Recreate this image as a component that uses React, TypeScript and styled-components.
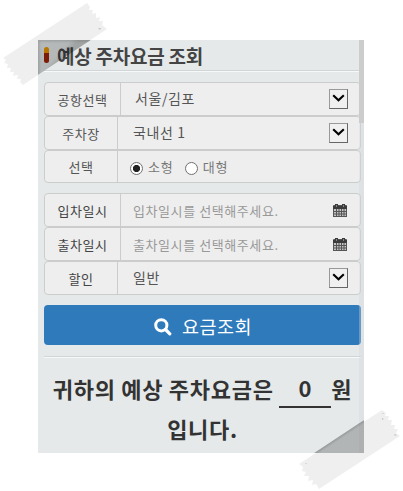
import { FC, ReactNode, useState } from "react";
import styled, { createGlobalStyle } from "styled-components";

const GlobalStyle = createGlobalStyle`
  body {
    margin: 0;
    background: #ffffff;
    font-family: "Noto Sans CJK KR", "Noto Sans", sans-serif;
  }

  * {
    box-sizing: border-box;
  }
`;

const Page = styled.div`
  position: relative;
  width: 403px;
  height: 491px;
  padding: 40px 39px 38px 38px;
  overflow: hidden;
`;

const Panel = styled.main`
  position: relative;
  height: 413px;
  padding: 0 3px 0 6px;
  background: #e5e9ea;
`;

const Header = styled.header`
  display: flex;
  align-items: center;
  height: 31px;
  margin-bottom: 11px;
  border-bottom: 1px solid #d1d5d8;
  box-shadow: 0 1px 0 #f7f8f8;
`;

const Capsule = styled.span`
  width: 5px;
  height: 16px;
  margin-right: 8px;
  border-radius: 3px;
  background: linear-gradient(#e89500 0 6px, #9c2409 6px);
`;

const Title = styled.h1`
  margin: 0;
  padding-top: 1px;
  color: #444444;
  font-size: 19px;
  line-height: 28px;
  font-weight: 700;
  letter-spacing: -0.25px;
  white-space: nowrap;
`;

const Group = styled.section`
  display: flex;
  flex-direction: column;
  margin-bottom: 10px;
`;

const Row = styled.div<{ $height?: number }>`
  display: flex;
  height: ${(p) => p.$height ?? 34}px;
  border: 1px solid #cccccc;
  border-radius: 4px;
  background: #eeeeee;
`;

const Label = styled.div<{ $wide?: boolean; $dark?: boolean }>`
  display: flex;
  align-items: center;
  justify-content: center;
  flex: none;
  width: ${(p) => (p.$wide ? 76 : 73)}px;
  padding-top: 1px;
  border-right: 1px solid #cccccc;
  color: ${(p) => (p.$dark ? "#444444" : "#555555")};
  font-size: 13px;
  line-height: 20px;
  letter-spacing: 0.6px;
`;

const Field = styled.div<{ $indent?: number }>`
  display: flex;
  align-items: center;
  flex: 1;
  padding: 0 12px 0 ${(p) => p.$indent ?? 15}px;
`;

const Value = styled.span`
  flex: 1;
  color: #555555;
  font-size: 14px;
  line-height: 20px;
  letter-spacing: 0.6px;
  padding-bottom: 3px;
`;

const Placeholder = styled.span`
  flex: 1;
  padding-top: 1px;
  color: #999999;
  font-size: 13px;
  line-height: 20px;
  letter-spacing: 0.58px;
`;

const DropButton = styled.span`
  display: flex;
  justify-content: center;
  width: 19px;
  height: 20px;
  padding-top: 4px;
  border: 1px solid #999999;
  border-right-color: #666666;
  border-bottom-color: #666666;
  background: #f0f0f0;
`;

const RadioLabel = styled.label`
  display: flex;
  align-items: center;
  margin-right: 11px;
  padding-top: 1px;
  color: #777777;
  font-size: 13px;
  line-height: 20px;
  letter-spacing: 0.9px;
`;

const RadioInput = styled.input`
  position: absolute;
  opacity: 0;
`;

const RadioMark = styled.span<{ $checked: boolean }>`
  width: 13px;
  height: 13px;
  margin-top: 2px;
  margin-right: 5px;
  border: 1px solid #707070;
  border-radius: 50%;
  background: ${(p) =>
    p.$checked
      ? "radial-gradient(circle, #222222 3.2px, #ffffff 4px)"
      : "#ffffff"};
`;

const SearchButton = styled.button`
  display: flex;
  align-items: center;
  justify-content: center;
  width: 100%;
  height: 40px;
  padding: 2px 0 0 1px;
  border: 0;
  border-radius: 4px;
  background: #2e7abb;
  color: #ffffff;
  font-family: inherit;
  font-size: 18.5px;
  line-height: 28px;
  letter-spacing: 0.5px;

  svg {
    margin: 2px 10px 0 0;
  }
`;

const Divider = styled.div`
  height: 2px;
  margin-top: 11px;
  border-top: 1px solid #d1d5d8;
  border-bottom: 1px solid #f7f8f8;
`;

const Result = styled.p`
  margin: 10px 0 0;
  color: #333333;
  font-size: 22px;
  line-height: 40px;
  font-weight: 700;
  letter-spacing: 0.7px;
  text-align: center;
  white-space: nowrap;
`;

const Amount = styled.span`
  display: inline-block;
  width: 52px;
  height: 35px;
  line-height: 29px;
  border-bottom: 2px solid #333333;
  vertical-align: top;
  margin-top: 5px;
`;

const ScrollBar = styled.div`
  position: absolute;
  top: 0;
  right: 0;
  width: 5px;
  height: 100%;
  background: rgba(210, 215, 218, 0.35);
`;

const ScrollThumb = styled.div`
  height: 83px;
  background: #cccccc;
`;

const TapeLayer = styled.svg`
  position: absolute;
  inset: 0;
  pointer-events: none;
`;

const ChevronIcon: FC = () => (
  <svg width="13" height="10" viewBox="0 0 13 10">
    <path d="M1.2 1.2 6.5 6.3 11.8 1.2" fill="none" stroke="#000" strokeWidth="2.1" />
  </svg>
);

const CalendarSvg = styled.svg`
  margin-right: 1px;
`;

const CalendarIcon: FC = () => (
  <CalendarSvg width="14" height="13" viewBox="0 0 14 13">
    <path d="M1 1h12a1 1 0 0 1 1 1v11H0V2a1 1 0 0 1 1-1z" fill="#555" />
    <path d="M0 2h14v3H0zM2 0h3v3H2zM9 0h3v3H9z" fill="#3c3c3c" />
    <path d="M3 1h1v2H3zM10 1h1v2h-1z" fill="#888" />
    <path
      d="M1 5h2v2H1zM4 5h1.5v2H4zM6.5 5H8v2H6.5zM9 5h1.5v2H9zM11.5 5H13v2h-1.5zM1 8h2v1.5H1zM4 8h1.5v1.5H4zM6.5 8H8v1.5H6.5zM9 8h1.5v1.5H9zM11.5 8H13v1.5h-1.5zM1 10.5h2V12H1zM4 10.5h1.5V12H4zM6.5 10.5H8V12H6.5zM9 10.5h1.5V12H9zM11.5 10.5H13V12h-1.5z"
      fill="#c4c4c4"
    />
  </CalendarSvg>
);

const SearchIcon: FC = () => (
  <svg width="18" height="18" viewBox="0 0 18 18" fill="none" stroke="#fff">
    <circle cx="7.3" cy="7.3" r="5.6" strokeWidth="3" />
    <path d="m11.5 11.5 4.3 4.3" strokeWidth="3.2" strokeLinecap="round" />
  </svg>
);

const Tapes: FC = () => (
  <TapeLayer width="403" height="491" viewBox="0 0 403 491">
    <defs>
      <linearGradient id="shadeTop" gradientUnits="userSpaceOnUse" x1="45" y1="40" x2="64" y2="57">
        <stop offset="0" stopColor="#000" stopOpacity="0.15" />
        <stop offset="0.75" stopColor="#000" stopOpacity="0.16" />
        <stop offset="1" stopColor="#000" stopOpacity="0.25" />
      </linearGradient>
      <filter id="soft" x="-20%" y="-20%" width="140%" height="140%">
        <feGaussianBlur stdDeviation="1.2" />
      </filter>
      <clipPath id="clipTop">
        <path d="M38 40H91L38 75z" />
      </clipPath>
      <clipPath id="clipBottom">
        <path d="M314 453 364 420V453z" />
      </clipPath>
    </defs>
    <g fill="#000" fillOpacity="0.062">
      <path d="M87 3 90 7 89 10 93 10 92 14 96 13 96 18 100 17 99 21 103 21 102 25 107 29 23 85 20 82 21 79 17 79 18 75 13 76 14 72 10 72 11 68 7 68 8 64 4 63 6 60 3 58z" />
      <path d="M382 410 386 413 385 416 389 416 388 420 392 420 391 425 395 425 394 429 398 429 396 433 400 436 319 489 316 484 312 485 313 480 308 481 309 476 304 476 306 472 302 471 303 467 299 464z" />
    </g>
    <g clipPath="url(#clipTop)">
      <path d="M38 40H91L38 75z" fill="url(#shadeTop)" />
      <path d="M38 75V40H91" fill="none" stroke="#000" strokeOpacity="0.14" strokeWidth="3" filter="url(#soft)" />
    </g>
    <g clipPath="url(#clipBottom)">
      <path d="M314 453 364 420V453z" fill="#000" fillOpacity="0.17" />
      <path d="M314 453 364 420" stroke="#000" strokeOpacity="0.35" strokeWidth="2" filter="url(#soft)" />
    </g>
    <g fill="#999" fillOpacity="0.5">
      <path d="M98 28l3 0-1 2zM382 413l2 0-1 1zM382 418l2 1-2 1zM394 434l3 1-2 1zM305 463l2 0-1 1z" />
    </g>
  </TapeLayer>
);

interface SelectRowProps {
  label: string;
  wide?: boolean;
  dark?: boolean;
  indent?: number;
  children: ReactNode;
}

const SelectRow: FC<SelectRowProps> = ({ label, wide, dark, indent, children }) => (
  <Row>
    <Label $wide={wide} $dark={dark}>{label}</Label>
    <Field $indent={indent}>
      <Value>{children}</Value>
      <DropButton>
        <ChevronIcon />
      </DropButton>
    </Field>
  </Row>
);

const DateRow: FC<{ label: string; placeholder: string }> = ({ label, placeholder }) => (
  <Row>
    <Label $wide $dark>{label}</Label>
    <Field $indent={12}>
      <Placeholder>{placeholder}</Placeholder>
      <CalendarIcon />
    </Field>
  </Row>
);

const carSizes = ["소형", "대형"];

const App: FC = () => {
  const [carSize, setCarSize] = useState("소형");

  return (
    <>
      <GlobalStyle />
      <Page>
        <Panel>
          <Header>
            <Capsule />
            <Title>예상 주차요금 조회</Title>
          </Header>

          {/* Airport and lot */}
          <Group>
            <SelectRow label="공항선택" wide indent={14}>서울/김포</SelectRow>
            <SelectRow label="주차장">국내선 1</SelectRow>
            <Row $height={33}>
              <Label>선택</Label>
              <Field $indent={12}>
                {carSizes.map((size) => (
                  <RadioLabel key={size}>
                    <RadioInput
                      type="radio"
                      name="carSize"
                      checked={carSize === size}
                      onChange={() => setCarSize(size)}
                    />
                    <RadioMark $checked={carSize === size} />
                    {size}
                  </RadioLabel>
                ))}
              </Field>
            </Row>
          </Group>

          {/* Dates and discount */}
          <Group>
            <DateRow label="입차일시" placeholder="입차일시를 선택해주세요." />
            <DateRow label="출차일시" placeholder="출차일시를 선택해주세요." />
            <SelectRow label="할인" dark>일반</SelectRow>
          </Group>

          <SearchButton>
            <SearchIcon />
            요금조회
          </SearchButton>
          <Divider />

          <Result>
            귀하의 예상 주차요금은 <Amount>0</Amount>원
            <br />
            입니다.
          </Result>

          <ScrollBar>
            <ScrollThumb />
          </ScrollBar>
        </Panel>
        <Tapes />
      </Page>
    </>
  );
};

export default App;
